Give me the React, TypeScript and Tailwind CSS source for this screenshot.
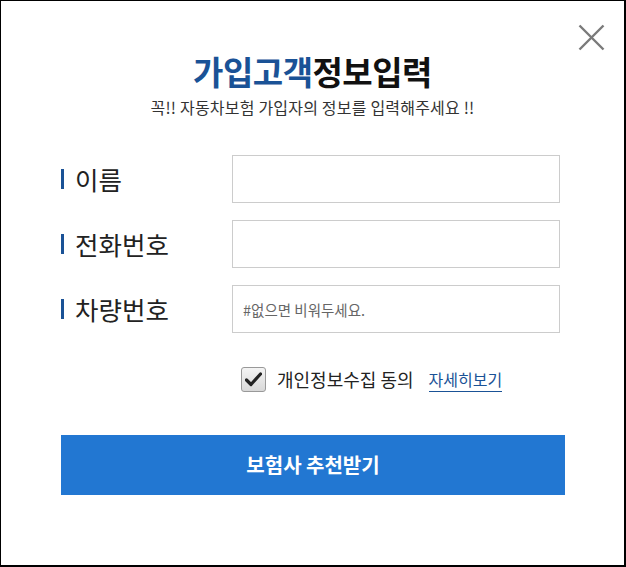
const font = { fontFamily: '"Noto Sans CJK KR", "Noto Sans", sans-serif' }

const Field = ({ label, placeholder }: { label: string; placeholder?: string }) => (
  <div className="flex items-center">
    <div className="w-[171px] flex items-center">
      <span className="w-[3px] h-[20px] bg-[#1a5296] mr-[11px]" />
      <span className="text-[25.5px] leading-none text-[#222]">{label}</span>
    </div>
    <input
      type="text"
      placeholder={placeholder}
      className="w-[328px] h-[48px] border border-[#cccccc] px-[10px] text-[14.5px] outline-none placeholder:text-[#666]"
    />
  </div>
)

export default function App() {
  return (
    <div style={font} className="relative w-[626px] h-[567px] bg-white border-l border-t border-r-2 border-b-2 border-black">
      <button className="absolute top-[23px] left-[577px]">
        <svg width="27" height="27" viewBox="0 0 27 27">
          <path d="M1.5 1.5 L25.5 25.5 M25.5 1.5 L1.5 25.5" stroke="#7a7a7a" strokeWidth="2.4" fill="none" />
        </svg>
      </button>

      <div className="flex flex-col items-center pt-[50px]">
        <h1 className="text-[33px] font-bold leading-[40px] tracking-[-0.5px]">
          <span className="text-[#1a5296]">가입고객</span>
          <span className="text-[#111]">정보입력</span>
        </h1>
        <p className="mt-[6px] text-[16px] leading-[20px] tracking-[0.2px] text-[#333]">꼭!! 자동차보험 가입자의 정보를 입력해주세요 !!</p>
      </div>

      <div className="flex flex-col gap-[17px] pl-[60px] mt-[38px]">
        <Field label="이름" />
        <Field label="전화번호" />
        <Field label="차량번호" placeholder="#없으면 비워두세요." />
      </div>

      <div className="flex items-center pl-[240px] mt-[34px]">
        <div className="w-[25px] h-[25px] rounded-[3px] border border-[#999] bg-gradient-to-b from-[#f4f4f4] to-[#d8d8d8] flex items-center justify-center">
          <svg width="17" height="15" viewBox="0 0 17 15">
            <path d="M1.5 8 L6 12.5 L15.5 2" fill="none" stroke="#222" strokeWidth="3.2" strokeLinecap="round" strokeLinejoin="round" />
          </svg>
        </div>
        <span className="ml-[11px] text-[18px] leading-[25px] text-[#222]">개인정보수집 동의</span>
        <a className="ml-[15px] text-[16px] text-[#1a5296] border-b border-[#1a5296] leading-[24px]">자세히보기</a>
      </div>

      <div className="pl-[60px] mt-[43px]">
        <button className="w-[504px] h-[60px] bg-[#2277d2] text-white text-[20px] font-bold">보험사 추천받기</button>
      </div>
    </div>
  )
}
